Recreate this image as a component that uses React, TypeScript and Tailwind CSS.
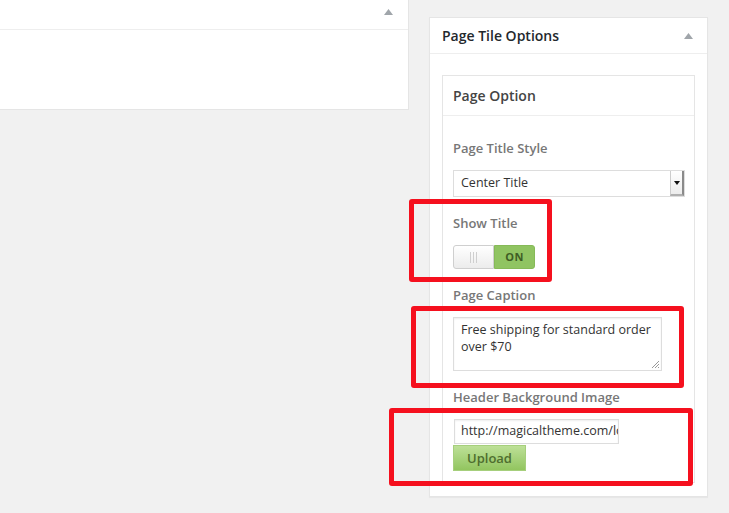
import React from "react";

function Caret() {
  return (
    <svg width="9" height="6" viewBox="0 0 9 6" className="block">
      <path d="M4.5 0L9 6H0z" fill="#a0a5aa" />
    </svg>
  );
}

function Label({ children }: { children: React.ReactNode }) {
  return <div className="text-[13px] leading-[20px] font-semibold text-[#777]">{children}</div>;
}

function RedBox({ className }: { className: string }) {
  return <div className={"absolute border-[5px] border-[#f5101e] rounded-[3px] pointer-events-none " + className} />;
}

export default function App() {
  return (
    <div
      className="relative w-[729px] h-[513px] overflow-hidden bg-[#f1f1f1] flex items-start"
      style={{ fontFamily: '"Open Sans", "Noto Sans", sans-serif' }}
    >
      {/* left metabox, cut off at top */}
      <div className="w-[409px] h-[110px] bg-white border-r border-b border-[#e5e5e5] flex flex-col">
        <div className="h-[30px] border-b border-[#eeeeee] flex items-center justify-end pr-[15px] pb-[6px]">
          <Caret />
        </div>
        <div className="flex-1" />
      </div>

      {/* right metabox */}
      <div className="ml-[20px] mt-[17px] w-[279px] bg-white border border-[#e5e5e5] shadow-[0_1px_1px_rgba(0,0,0,0.04)]">
        <div className="h-[36px] border-b border-[#eeeeee] flex items-center justify-between pl-[12px] pr-[14px]">
          <span className="text-[14px] font-semibold text-[#23282d]">Page Tile Options</span>
          <Caret />
        </div>
        <div className="pt-[21px] pl-[12px] pr-[12px] pb-[13px]">
          <div className="border border-[#e5e5e5]">
            <div className="h-[40px] border-b border-[#eeeeee] flex items-center pl-[10px]">
              <span className="text-[14px] font-semibold text-[#444]">Page Option</span>
            </div>
            <div className="pt-[22px] pl-[10px] pr-[9px] pb-[11px] flex flex-col">
              <Label>Page Title Style</Label>
              <div className="mt-[12px] h-[27px] w-[232px] border border-[#dddddd] bg-white flex items-stretch">
                <div className="flex-1 flex items-center pl-[7px] text-[12.5px] text-[#333]">Center Title</div>
                <div className="w-[14px] border-l border-[#cccccc] bg-gradient-to-b from-white to-[#ececec] border-r-2 border-r-[#8a8a8a] border-b-2 border-b-[#b0b0b0] flex items-center justify-center">
                  <svg width="6" height="4" viewBox="0 0 6 4">
                    <path d="M0 0H6L3 4z" fill="#111" />
                  </svg>
                </div>
              </div>

              <div className="mt-[16px]">
                <Label>Show Title</Label>
              </div>
              <div className="mt-[12px] h-[24px] w-[82px] flex">
                <div className="w-[41px] border border-[#cfcfcf] rounded-l-[3px] bg-gradient-to-b from-white to-[#ececec] flex items-center justify-center gap-[2px]">
                  <span className="w-px h-[11px] bg-[#cfcfcf]" />
                  <span className="w-px h-[11px] bg-[#cfcfcf]" />
                  <span className="w-px h-[11px] bg-[#cfcfcf]" />
                </div>
                <div className="w-[41px] rounded-r-[3px] bg-[#90c462] border border-[#86ba58] flex items-center justify-center text-[11px] font-bold text-[#3f5d24] tracking-[0.5px]">
                  ON
                </div>
              </div>

              <div className="mt-[16px]">
                <Label>Page Caption</Label>
              </div>
              <div className="mt-[12px] relative h-[54px] w-[209px] border border-[#dddddd] shadow-[inset_0_1px_2px_rgba(0,0,0,0.07)] pl-[7px] pr-[2px] py-[3px] text-[12.5px] leading-[17px] text-[#333] whitespace-nowrap overflow-hidden">
                Free shipping for standard order
                <br />
                over $70
                <svg width="9" height="9" viewBox="0 0 9 9" className="absolute right-[1px] bottom-[1px]">
                  <path d="M8 1L1 8M8 4L4 8M8 7L7 8" stroke="#999" strokeWidth="1" />
                </svg>
              </div>

              <div className="mt-[16px]">
                <Label>Header Background Image</Label>
              </div>
              <div className="mt-[12px] ml-[1px] h-[25px] w-[165px] border border-[#dddddd] shadow-[inset_0_1px_2px_rgba(0,0,0,0.07)] overflow-hidden whitespace-nowrap flex items-center pl-[6px] text-[12.5px] text-[#333]">
                http://magicaltheme.com/logo.png
              </div>
              <div className="mt-[1px] h-[26px] w-[73px] border border-[#a6cf7c] bg-gradient-to-b from-[#bde097] to-[#92c55f] flex items-center justify-center text-[13px] font-semibold text-[#4e6d2e] pt-[2px]">
                Upload
              </div>
            </div>
          </div>
        </div>
      </div>

      <RedBox className="left-[409px] top-[199px] w-[143px] h-[83px]" />
      <RedBox className="left-[411px] top-[306px] w-[273px] h-[82px]" />
      <RedBox className="left-[389px] top-[408px] w-[304px] h-[78px]" />
    </div>
  );
}
